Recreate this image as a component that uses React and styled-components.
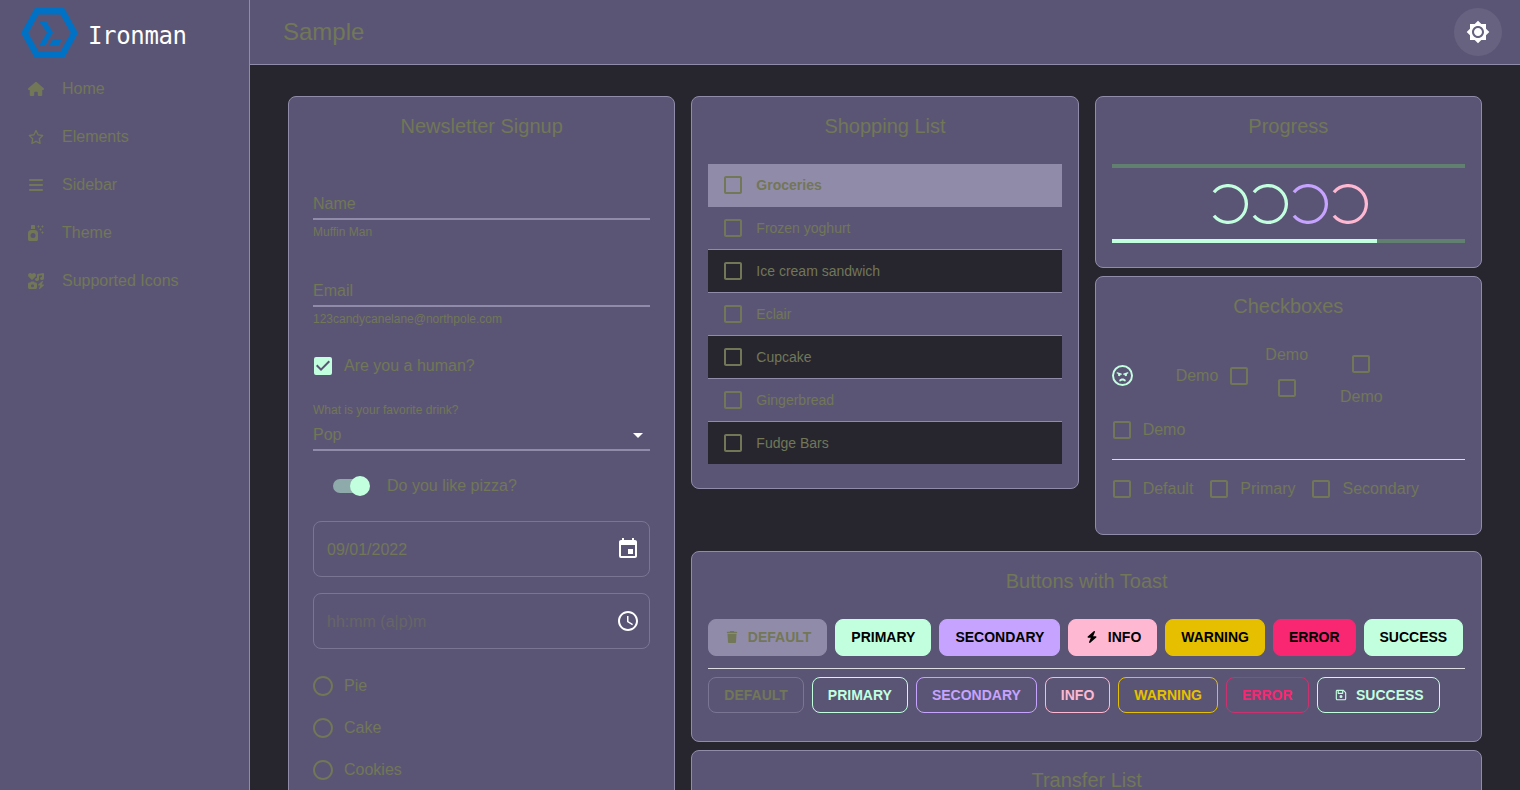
import React from 'react';
import styled, { createGlobalStyle } from 'styled-components';
import {
  FaHouse, FaRegStar, FaBars, FaSprayCanSparkles, FaIcons,
  FaTrash, FaBolt, FaRegFloppyDisk, FaRegFaceAngry,
} from 'react-icons/fa6';
import {
  MdBrightness7, MdCheckBox, MdCheckBoxOutlineBlank, MdArrowDropDown,
  MdEvent, MdAccessTime, MdRadioButtonUnchecked,
} from 'react-icons/md';

const c = {
  page: '#27262f',
  panel: '#5b5575',
  line: '#918baa',
  text: '#717757',
  mint: '#c2ffdf',
  purple: '#c5a3ff',
  pink: '#ffb8d1',
  yellow: '#e6c000',
  red: '#f92672',
};

const GlobalStyle = createGlobalStyle`
  *, *::before, *::after { box-sizing: border-box; }
  body {
    margin: 0;
    overflow: hidden;
    background: ${c.page};
    color: ${c.text};
    font: 400 16px/24px "Liberation Sans", Arial, sans-serif;
  }
  svg { display: block; flex: none; }
`;

const Shell = styled.div`
  display: flex;
  height: 790px;
  overflow: hidden;
`;

const Sidebar = styled.nav`
  flex: none;
  width: 250px;
  background: ${c.panel};
  border-right: 1px solid ${c.line};
`;

const Brand = styled.div`
  display: flex;
  align-items: center;
  gap: 10px;
  height: 65px;
  padding: 1px 0 0 21px;
`;

const BrandName = styled.span`
  color: #fff;
  font: 400 24px/28px "DejaVu Sans Mono", monospace;
  letter-spacing: -0.35px;
  padding-top: 5px;
`;

const NavItem = styled.a`
  display: flex;
  align-items: center;
  height: 48px;
  padding-left: 24px;
`;

const NavIcon = styled.span`
  display: flex;
  justify-content: center;
  width: 24px;
  margin-right: 14px;
  svg { width: auto; height: 16px; }
`;

const Main = styled.main`
  flex: 1;
  min-width: 0;
`;

const TopBar = styled.header`
  display: flex;
  align-items: center;
  justify-content: space-between;
  height: 65px;
  padding: 0 18px 0 33px;
  background: ${c.panel};
  border-bottom: 1px solid ${c.line};
`;

const PageTitle = styled.h1`
  margin: 0;
  font-size: 24px;
  font-weight: 400;
  line-height: 32px;
`;

const ThemeButton = styled.button`
  display: flex;
  align-items: center;
  justify-content: center;
  width: 48px;
  height: 48px;
  padding: 0;
  border: 0;
  border-radius: 50%;
  background: #67627f;
  color: #fff;
`;

const Board = styled.div`
  display: grid;
  grid-template-columns: 387.33px 1fr;
  gap: 16px;
  padding: 31px 38px 0;
`;

const Stack = styled.div`
  display: flex;
  flex-direction: column;
  gap: ${(p) => p.$gap}px;
  min-width: 0;
`;

const Pair = styled.div`
  display: grid;
  grid-template-columns: 1fr 1fr;
  gap: 16px;
  align-items: start;
`;

const Card = styled.section`
  height: ${(p) => p.$h}px;
  padding: 16px;
  background: ${c.panel};
  border: 1px solid ${c.line};
  border-radius: 8px;
`;

const CardTitle = styled.h2`
  margin: 0 0 ${(p) => p.$below ?? 24}px;
  font-size: 20px;
  font-weight: 400;
  line-height: 27px;
  text-align: center;
`;

const Form = styled.form`
  padding: 24px 8px 0;
`;

const Field = styled.div`
  height: 87px;
`;

const Underlined = styled.div`
  display: flex;
  align-items: center;
  justify-content: space-between;
  height: ${(p) => p.$h ?? 32}px;
  padding-top: ${(p) => p.$top ?? 2}px;
  border-bottom: 2px solid ${c.line};
`;

const Small = styled.div`
  font-size: 12px;
  line-height: 19px;
  padding-top: ${(p) => p.$top ?? 0}px;
`;

const Arrow = styled.span`
  color: #fff;
`;

const Choice = styled.label`
  display: inline-flex;
  flex-direction: ${(p) => p.$dir ?? 'row'};
  align-items: center;
  margin: ${(p) => p.$margin ?? '0 16px 0 -11px'};
`;

const Mark = styled.span`
  display: flex;
  align-items: center;
  justify-content: center;
  width: 42px;
  height: 42px;
  color: ${(p) => p.$color ?? c.text};
`;

const Line = styled.div`
  display: flex;
  align-items: center;
`;

const FaceLine = styled(Line)`
  & > :first-child svg { margin: 0 0 1px 1px; }
`;

const SelectField = styled.div`
  margin-top: 13px;
`;

const SwitchRow = styled.div`
  display: flex;
  align-items: center;
  gap: 20px;
  height: 38px;
  margin: 16px 0 16px 20px;
`;

const Track = styled.span`
  display: flex;
  align-items: center;
  justify-content: flex-end;
  width: 34px;
  height: 14px;
  border-radius: 7px;
  background: #8faaaa;
`;

const Thumb = styled.span`
  flex: none;
  width: 20px;
  height: 20px;
  margin-right: -3px;
  border-radius: 50%;
  background: ${c.mint};
`;

const PickerBox = styled.div`
  display: flex;
  align-items: center;
  justify-content: space-between;
  height: 56px;
  margin-bottom: 16px;
  padding: 0 9px 0 13px;
  border: 1px solid #7b7594;
  border-radius: 8px;
  color: ${(p) => (p.$empty ? '#666567' : c.text)};
  svg { color: #fff; }
`;

const PickerText = styled.span`
  padding-top: 2px;
`;

const Table = styled.div`
  display: flex;
  flex-direction: column;
`;

const Row = styled.div`
  display: flex;
  align-items: center;
  height: 43px;
  padding-left: 13px;
  gap: 11px;
  font-size: 14px;
  font-weight: ${(p) => (p.$head ? 700 : 400)};
  background: ${(p) => (p.$head ? c.line : p.$dark ? c.page : 'transparent')};
  border-bottom: 1px solid ${c.line};
  &:last-child { height: 42px; border-bottom: 0; }
`;

const Bar = styled.div`
  height: 4px;
  background: #61806f;
`;

const BarFill = styled.div`
  height: 4px;
  background: ${c.mint};
`;

const Spinners = styled.div`
  display: flex;
  justify-content: center;
  margin: 16px 0 15px;
`;

const Divider = styled.hr`
  height: 1px;
  margin: ${(p) => p.$margin};
  border: 0;
  background: #dedde3;
`;

const Buttons = styled.div`
  display: flex;
  gap: 8px;
  height: ${(p) => p.$h}px;
`;

const Button = styled.button`
  display: flex;
  align-items: center;
  height: 100%;
  padding: 0 15px ${(p) => (p.$bg ? 1 : 0)}px;
  border: 1px solid ${(p) => p.$border ?? p.$bg ?? p.$fg};
  border-radius: 8px;
  background: ${(p) => p.$bg ?? 'transparent'};
  color: ${(p) => p.$fg};
  font: 700 14px/24px "Liberation Sans", Arial, sans-serif;
  white-space: nowrap;
`;

const ButtonIcon = styled.span`
  display: flex;
  justify-content: center;
  width: 16px;
  margin-right: 7.5px;
`;

function Logo() {
  return (
    <svg width="57" height="50" viewBox="0 0 57 50">
      <path d="M15.8 3.2H41.2L53.4 25L41.2 46.8H15.8L3.6 25Z" fill="none" stroke="#0072c6" strokeWidth="6.4" />
      <path d="M18 13H25L32 24.5L24 37.5H18L26 24.5Z" fill="#0072c6" />
      <path d="M32 31.5H41L37.5 37.5H28Z" fill="#0072c6" />
    </svg>
  );
}

function Spinner({ color }) {
  return (
    <svg width="40" height="40" viewBox="0 0 44 44">
      <path d="M6.53 9.02A20.2 20.2 0 1 1 6.53 34.98" fill="none" stroke={color} strokeWidth="3.6" />
    </svg>
  );
}

const Box = () => <MdCheckBoxOutlineBlank size={24} />;

function Check({ label, dir, margin, children, color }) {
  return (
    <Choice $dir={dir} $margin={margin}>
      <Mark $color={color}>{children ?? <Box />}</Mark>
      {label && <span>{label}</span>}
    </Choice>
  );
}

const nav = [
  ['Home', FaHouse],
  ['Elements', FaRegStar],
  ['Sidebar', FaBars],
  ['Theme', FaSprayCanSparkles],
  ['Supported Icons', FaIcons],
];

const groceries = ['Groceries', 'Frozen yoghurt', 'Ice cream sandwich', 'Eclair', 'Cupcake', 'Gingerbread', 'Fudge Bars'];

const filled = [
  ['DEFAULT', c.line, c.text, FaTrash],
  ['PRIMARY', c.mint, '#000'],
  ['SECONDARY', c.purple, '#000'],
  ['INFO', c.pink, '#000', FaBolt],
  ['WARNING', c.yellow, '#000'],
  ['ERROR', c.red, '#000'],
  ['SUCCESS', c.mint, '#000'],
];

const outlined = [
  ['DEFAULT', c.text, '#7b7594'],
  ['PRIMARY', c.mint],
  ['SECONDARY', c.purple],
  ['INFO', c.pink],
  ['WARNING', c.yellow],
  ['ERROR', c.red, '#cc316f'],
  ['SUCCESS', c.mint, c.mint, FaRegFloppyDisk],
];

export default function App() {
  return (
    <Shell>
      <GlobalStyle />
      <Sidebar>
        <Brand>
          <Logo />
          <BrandName>Ironman</BrandName>
        </Brand>
        {nav.map(([label, Icon]) => (
          <NavItem key={label}>
            <NavIcon><Icon /></NavIcon>
            {label}
          </NavItem>
        ))}
      </Sidebar>
      <Main>
        <TopBar>
          <PageTitle>Sample</PageTitle>
          <ThemeButton><MdBrightness7 size={24} /></ThemeButton>
        </TopBar>
        <Board>
          <Card $h={760}>
            <CardTitle>Newsletter Signup</CardTitle>
            <Form>
              <Field>
                <Underlined>Name</Underlined>
                <Small $top={3}>Muffin Man</Small>
              </Field>
              <Field>
                <Underlined>Email</Underlined>
                <Small $top={3}>123candycanelane@northpole.com</Small>
              </Field>
              <Line>
                <Check label="Are you a human?" color={c.mint} margin="-17px 0 0 -11px">
                  <MdCheckBox size={24} />
                </Check>
              </Line>
              <SelectField>
                <Small $top={1}>What is your favorite drink?</Small>
                <Underlined $h={31} $top={0}>
                  Pop
                  <Arrow><MdArrowDropDown size={24} /></Arrow>
                </Underlined>
              </SelectField>
              <SwitchRow>
                <Track><Thumb /></Track>
                Do you like pizza?
              </SwitchRow>
              <PickerBox><PickerText>09/01/2022</PickerText><MdEvent size={24} /></PickerBox>
              <PickerBox $empty><PickerText>hh:mm (a|p)m</PickerText><MdAccessTime size={24} /></PickerBox>
              {['Pie', 'Cake', 'Cookies'].map((name) => (
                <Line key={name}>
                  <Check label={name}><MdRadioButtonUnchecked size={24} /></Check>
                </Line>
              ))}
            </Form>
          </Card>
          <Stack $gap={16}>
            <Pair>
              <Card $h={393}>
                <CardTitle>Shopping List</CardTitle>
                <Table>
                  {groceries.map((item, i) => (
                    <Row key={item} $head={i === 0} $dark={i > 0 && i % 2 === 0}>
                      <Box />
                      {item}
                    </Row>
                  ))}
                </Table>
              </Card>
              <Stack $gap={8}>
                <Card $h={172}>
                  <CardTitle>Progress</CardTitle>
                  <Bar />
                  <Spinners>
                    <Spinner color={c.mint} />
                    <Spinner color={c.mint} />
                    <Spinner color={c.purple} />
                    <Spinner color={c.pink} />
                  </Spinners>
                  <Bar><BarFill style={{ width: '75%' }} /></Bar>
                </Card>
                <Card $h={259}>
                  <CardTitle $below={23}>Checkboxes</CardTitle>
                  <FaceLine>
                    <Check color={c.mint}><FaRegFaceAngry size={21} /></Check>
                    <Check label="Demo" dir="row-reverse" margin="0 -11px 0 17px" />
                    <Check label="Demo" dir="column-reverse" margin="0 16px" />
                    <Check label="Demo" dir="column" margin="0 0 0 16px" />
                  </FaceLine>
                  <Line><Check label="Demo" /></Line>
                  <Divider $margin="8px 0" />
                  <Line>
                    <Check label="Default" />
                    <Check label="Primary" />
                    <Check label="Secondary" />
                  </Line>
                </Card>
              </Stack>
            </Pair>
            <Stack $gap={8}>
              <Card $h={191}>
                <CardTitle>Buttons with Toast</CardTitle>
                <Buttons $h={37}>
                  {filled.map(([label, bg, fg, Icon]) => (
                    <Button key={label} $bg={bg} $fg={fg}>
                      {Icon && <ButtonIcon><Icon size={12} /></ButtonIcon>}
                      {label}
                    </Button>
                  ))}
                </Buttons>
                <Divider $margin="12px 0 8px" />
                <Buttons $h={36}>
                  {outlined.map(([label, fg, border, Icon]) => (
                    <Button key={label} $fg={fg} $border={border}>
                      {Icon && <ButtonIcon><Icon size={12} /></ButtonIcon>}
                      {label}
                    </Button>
                  ))}
                </Buttons>
              </Card>
              <Card $h={200}>
                <CardTitle>Transfer List</CardTitle>
              </Card>
            </Stack>
          </Stack>
        </Board>
      </Main>
    </Shell>
  );
}
